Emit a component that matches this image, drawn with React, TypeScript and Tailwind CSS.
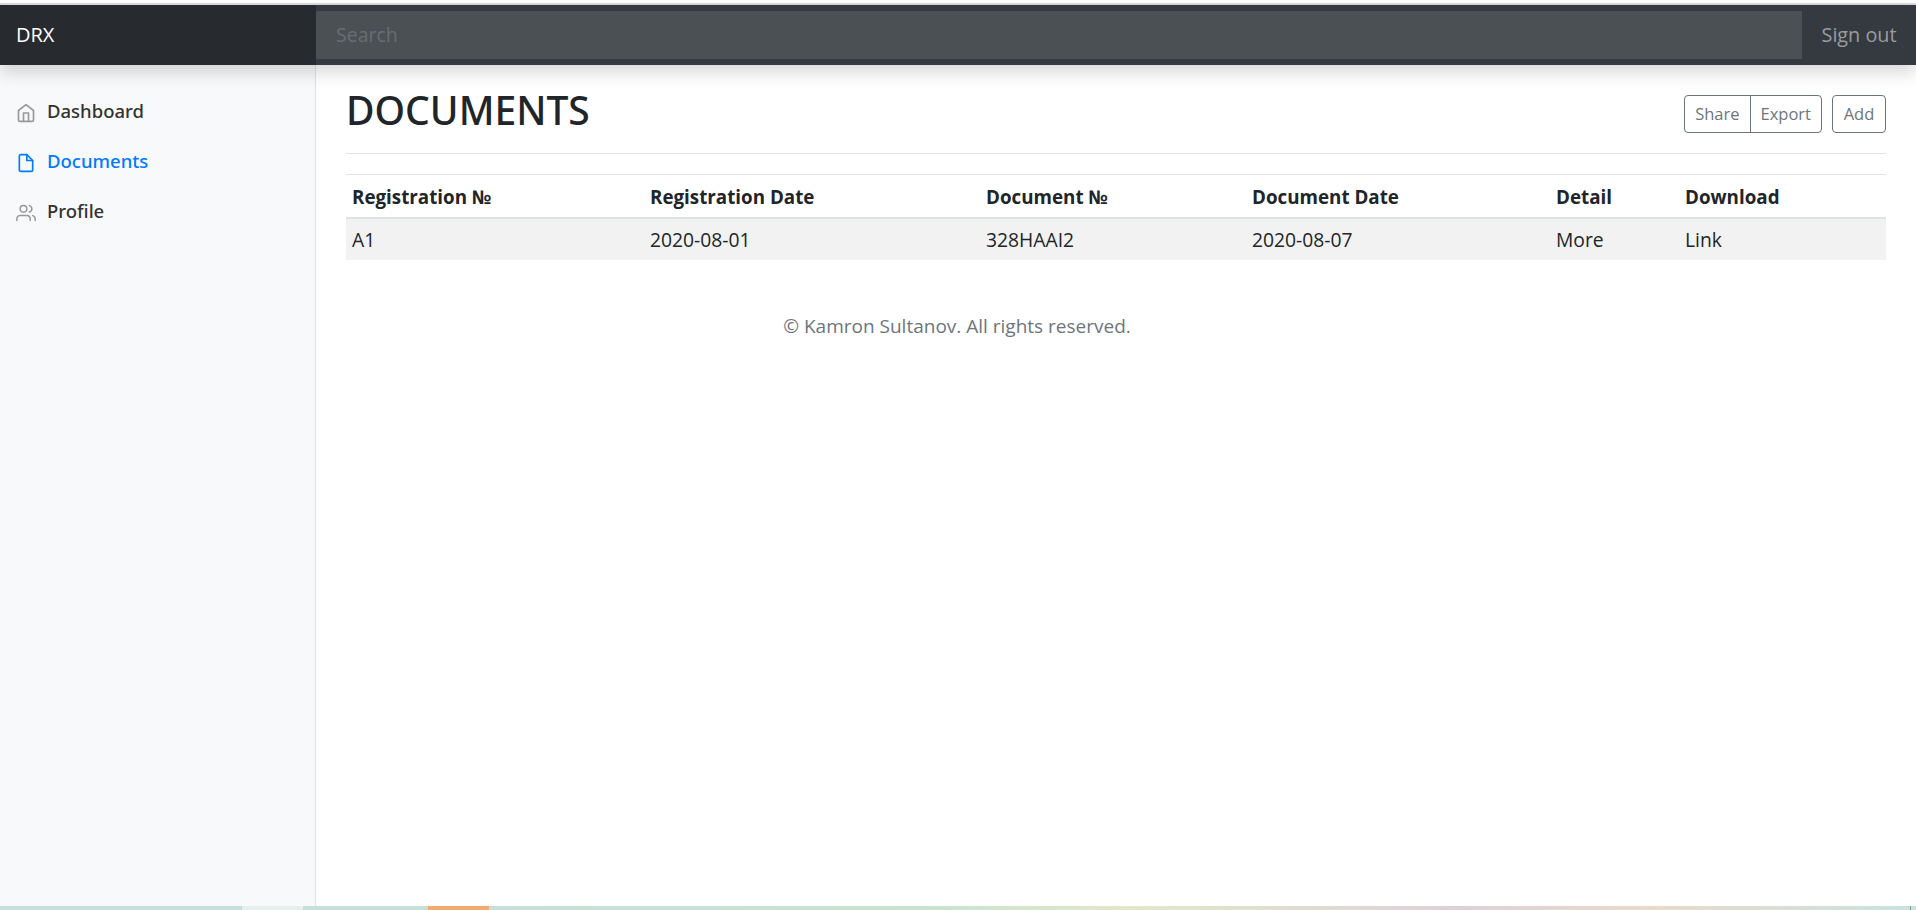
const font = "font-['Open_Sans','Noto_Sans',sans-serif]";

const columns = [
  { head: "Registration №", cell: "A1", width: "w-[298px]" },
  { head: "Registration Date", cell: "2020-08-01", width: "w-[336px]" },
  { head: "Document №", cell: "328HAAI2", width: "w-[266px]" },
  { head: "Document Date", cell: "2020-08-07", width: "w-[304px]" },
  { head: "Detail", cell: "More", width: "w-[129px]" },
  { head: "Download", cell: "Link", width: "w-[207px]" },
];

function HomeIcon() {
  return (
    <svg width="20" height="20" viewBox="0 0 24 24" fill="none" stroke="#999" strokeWidth="2" strokeLinecap="round" strokeLinejoin="round">
      <path d="M3 9l9-7 9 7v11a2 2 0 0 1-2 2H5a2 2 0 0 1-2-2z" />
      <polyline points="9 22 9 12 15 12 15 22" />
    </svg>
  );
}

function FileIcon() {
  return (
    <svg width="20" height="20" viewBox="0 0 24 24" fill="none" stroke="#007bff" strokeWidth="2" strokeLinecap="round" strokeLinejoin="round">
      <path d="M13 2H6a2 2 0 0 0-2 2v16a2 2 0 0 0 2 2h12a2 2 0 0 0 2-2V9z" />
      <polyline points="13 2 13 9 20 9" />
    </svg>
  );
}

function UsersIcon() {
  return (
    <svg width="20" height="20" viewBox="0 0 24 24" fill="none" stroke="#999" strokeWidth="1.8" strokeLinecap="round" strokeLinejoin="round">
      <path d="M17 21v-2a4 4 0 0 0-4-4H5a4 4 0 0 0-4 4v2" />
      <circle cx="9" cy="7" r="4" />
      <path d="M23 21v-2a4 4 0 0 0-3-3.87" />
      <path d="M16 3.13a4 4 0 0 1 0 7.75" />
    </svg>
  );
}

function NavItem({ icon, label, active }: { icon: React.ReactNode; label: string; active?: boolean }) {
  return (
    <a className={`flex h-[50px] items-center font-['Noto_Sans',sans-serif] text-[18.5px] font-medium ${active ? "text-[#007bff]" : "text-[#333]"}`}>
      <span className="w-[31px] pt-[4px]">{icon}</span>
      {label}
    </a>
  );
}

export default function App() {
  return (
    <div className={`flex h-[910px] flex-col overflow-hidden bg-white text-[#212529] ${font}`}>
      <div className="h-[3px] bg-white" />
      <div className="h-[2px] bg-[#d9dadd]" />

      {/* Navbar */}
      <header className="relative z-10 flex h-[60px] items-center bg-[#343a40] shadow-[0_8px_16px_rgba(0,0,0,0.15)]">
        <div className="flex h-full w-[316px] items-center bg-[#272a2f] pl-4 text-[20px] text-white">DRX</div>
        <div className="flex h-[48px] flex-1 items-center bg-[#4b5055] px-[20px] text-[19.5px] text-[#686d71]">Search</div>
        <div className="flex w-[114px] justify-center text-[19.8px] text-white/50">Sign out</div>
      </header>

      <div className="flex min-h-0 flex-1">
        {/* Sidebar */}
        <aside className="w-[316px] border-r border-[#e0e1e3] bg-[#f8f9fa] pl-[16px] pt-[21px]">
          <NavItem icon={<HomeIcon />} label="Dashboard" />
          <NavItem icon={<FileIcon />} label="Documents" active />
          <NavItem icon={<UsersIcon />} label="Profile" />
        </aside>

        {/* Main */}
        <main className="flex-1 pl-[30px] pr-[30px]">
          <div className="flex h-[89px] items-start justify-between border-b border-[#dee2e6] pt-[21px]">
            <h1 className="font-['Noto_Sans',sans-serif] text-[39px] leading-[48px] font-medium">DOCUMENTS</h1>
            <div className="flex gap-[10px] pt-[9px] text-[16.5px] text-[#6c757d]">
              <div className="flex h-[38px] rounded-[4px] border border-[#6c757d]">
                <span className="flex items-center border-r border-[#6c757d] px-[10px]">Share</span>
                <span className="flex items-center px-[10px]">Export</span>
              </div>
              <span className="flex h-[38px] w-[54px] items-center justify-center rounded-[4px] border border-[#6c757d]">Add</span>
            </div>
          </div>

          <table className="mt-[20px] w-[1540px] table-fixed border-t border-[#dee2e6] text-[19.3px]">
            <thead>
              <tr className="h-[43px] border-b-2 border-[#dee2e6] text-[18.8px]">
                {columns.map((c) => (
                  <th key={c.head} className={`${c.width} px-[6px] pt-[2px] text-left font-bold`}>{c.head}</th>
                ))}
              </tr>
            </thead>
            <tbody>
              <tr className="h-[42px] bg-[#f2f2f2]">
                {columns.map((c) => (
                  <td key={c.head} className="px-[6px] pt-[2px]">{c.cell}</td>
                ))}
              </tr>
            </tbody>
          </table>

          <p className="mt-[52px] w-[1222px] text-center text-[19px] text-[#6c757d]">© Kamron Sultanov. All rights reserved.</p>
        </main>
      </div>

      {/* Bottom strip */}
      <div className="flex h-[4px]">
        <div className="w-[242px] bg-[#c8dedb]" />
        <div className="w-[61px] bg-[#e4f0ec]" />
        <div className="w-[125px] bg-[#c6e0d9]" />
        <div className="w-[61px] bg-[#f2ab6c]" />
        <div className="flex-1 bg-[linear-gradient(90deg,#c6e0d9_0%,#c9e3cf_32%,#e2e8c8_45%,#dfd0d8_68%,#eadacb_82%,#c8e2de_100%)]" />
        <div className="w-px bg-[#7f9a96]" />
        <div className="w-[5px] bg-[#c8e2de]" />
      </div>
    </div>
  );
}
